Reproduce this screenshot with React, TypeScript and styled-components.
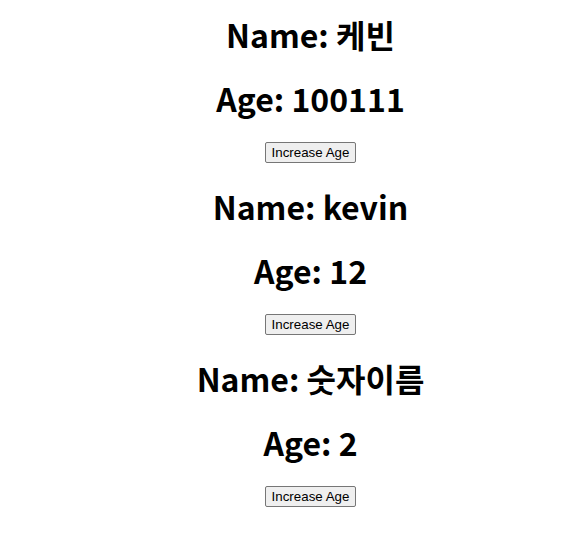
import React, { useState } from "react";
import styled, { createGlobalStyle } from "styled-components";

const GlobalStyle = createGlobalStyle`
  html, body {
    margin: 0;
    padding: 0;
    background: #ffffff;
  }
  body {
    font-family: "Noto Sans CJK KR", "Noto Sans", sans-serif;
    color: #000000;
  }
`;

const Page = styled.div`
  box-sizing: border-box;
  width: 100%;
  display: flex;
  flex-direction: column;
  align-items: center;
  gap: 23px;
  padding: 14px 0 0 49px;
`;

const Person = styled.section`
  display: flex;
  flex-direction: column;
  align-items: center;
  gap: 23px;
`;

const Heading = styled.h1`
  margin: 0;
  font-family: "Noto Sans CJK KR", "Noto Sans", sans-serif;
  font-size: 32px;
  font-weight: 700;
  line-height: 41px;
  text-align: center;
  white-space: nowrap;
`;

const Button = styled.button`
  font-family: "Liberation Sans", Arial, sans-serif;
  font-size: 13.33px;
  line-height: 15px;
  padding: 1px 6px;
  height: 21px;
  border: 1px solid #767676;
  border-radius: 2px;
  background: #efefef;
  color: #000000;
  cursor: pointer;
`;

type PersonData = { name: string; age: number };

function PersonCard({ initial }: { initial: PersonData }) {
  const [age, setAge] = useState(initial.age);
  return (
    <Person>
      <Heading>Name: {initial.name}</Heading>
      <Heading>Age: {age}</Heading>
      <Button onClick={() => setAge(age + 1)}>Increase Age</Button>
    </Person>
  );
}

const people: PersonData[] = [
  { name: "케빈", age: 100111 },
  { name: "kevin", age: 12 },
  { name: "숫자이름", age: 2 },
];

export default function App() {
  return (
    <>
      <GlobalStyle />
      <Page>
        {people.map((p) => (
          <PersonCard key={p.name} initial={p} />
        ))}
      </Page>
    </>
  );
}
